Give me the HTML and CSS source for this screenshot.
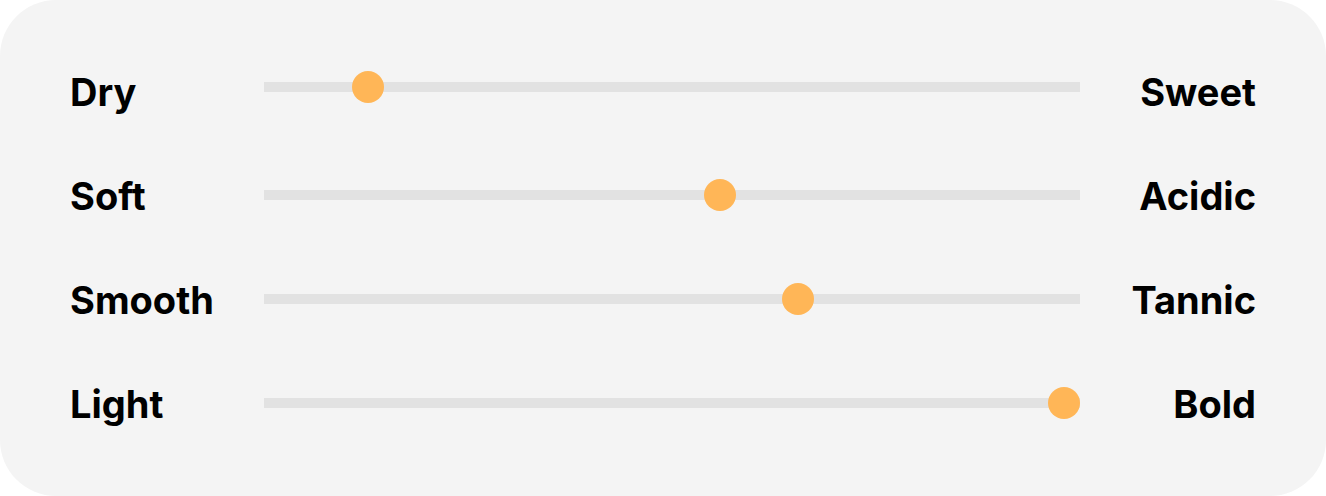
FILE: index.html
```html
<!DOCTYPE html>
<html>
  <head>
    <title>Taste profile</title>
    <link rel="stylesheet" href="styles.css">
  </head>
  <body>
    <div class="card">
      <div class="row">
        <span class="label">Dry</span>
        <div class="track"><span class="thumb" style="--value: 0.1122"></span></div>
        <span class="label label-right">Sweet</span>
      </div>
      <div class="row">
        <span class="label">Soft</span>
        <div class="track"><span class="thumb" style="--value: 0.5612"></span></div>
        <span class="label label-right">Acidic</span>
      </div>
      <div class="row">
        <span class="label">Smooth</span>
        <div class="track"><span class="thumb" style="--value: 0.6607"></span></div>
        <span class="label label-right">Tannic</span>
      </div>
      <div class="row">
        <span class="label">Light</span>
        <div class="track"><span class="thumb" style="--value: 1"></span></div>
        <span class="label label-right">Bold</span>
      </div>
    </div>
  </body>
</html>
```

FILE: styles.css
```css
body {
  margin: 0;
  background-color: #ffffff;
  font-family: Inter, "Liberation Sans", sans-serif;
}
.card {
  background: #f4f4f4;
  border-radius: 56px;
  height: 496px;
  box-sizing: border-box;
  padding: 40px 70px;
}
.row {
  display: grid;
  grid-template-columns: 194px 1fr 176px;
  align-items: center;
  height: 104px;
}
.label {
  font-size: 38px;
  font-weight: 700;
  line-height: 104px;
  color: #000;
}
.label-right {
  text-align: right;
}
.track {
  position: relative;
  height: 10px;
  margin-top: -2px;
  background: #e2e2e2;
}
.row:first-child .track {
  margin-top: -10px;
}
.thumb {
  position: absolute;
  top: -11px;
  left: calc((100% - 32px) * var(--value));
  width: 32px;
  height: 32px;
  border-radius: 50%;
  background: #ffb657;
}
```
